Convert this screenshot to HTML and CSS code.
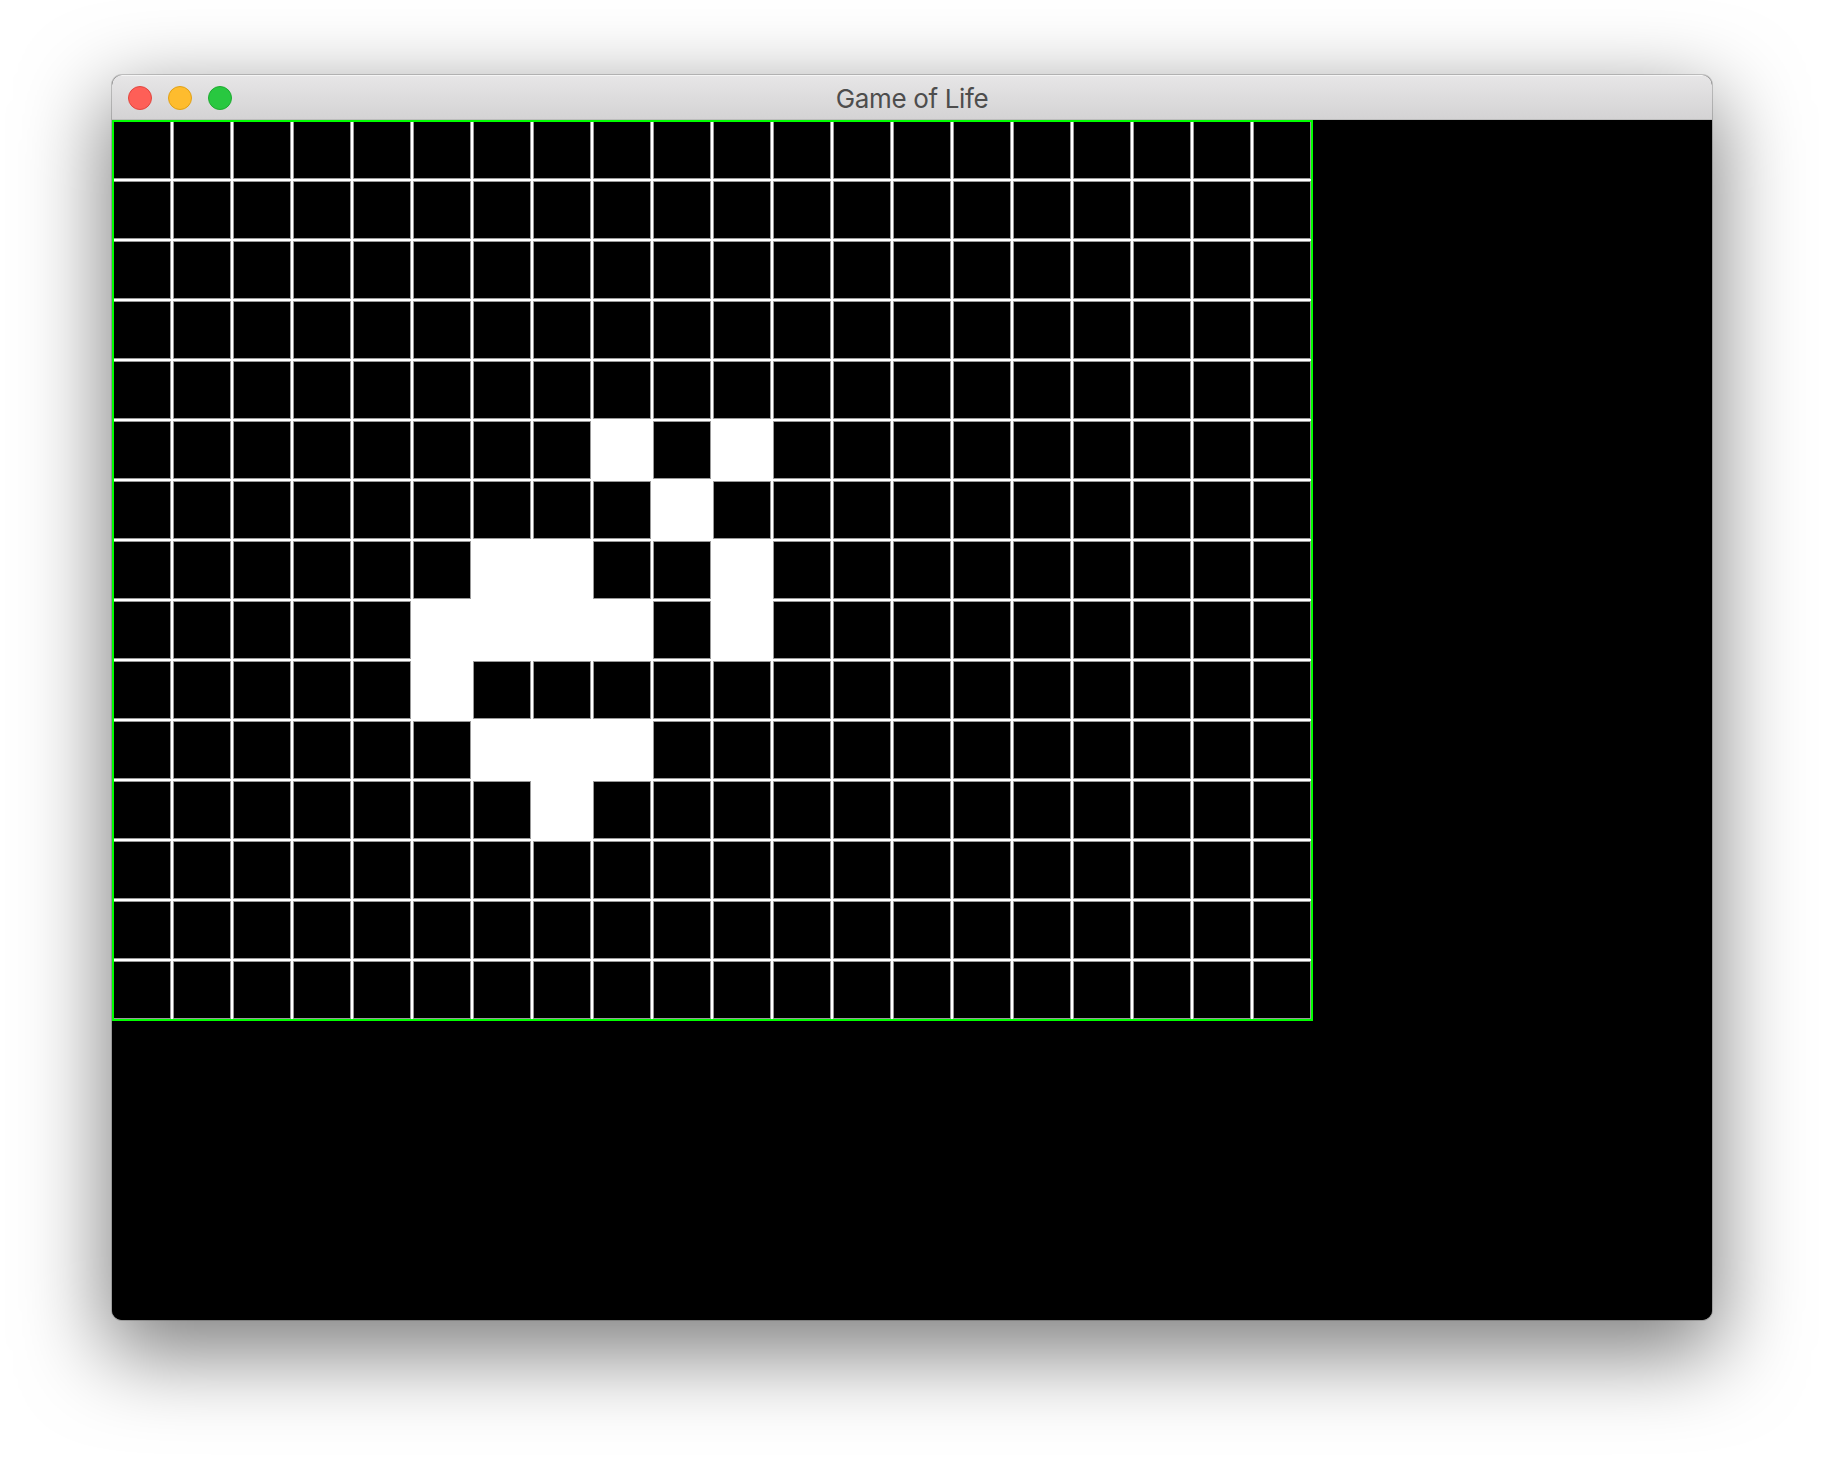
FILE: index.html
```html
<!DOCTYPE html>
<html lang="en">
<head>
<meta charset="utf-8">
<title>Game of Life</title>
<link rel="stylesheet" href="styles.css">
</head>
<body>
<div class="window">
  <div class="titlebar">
    <div class="lights">
      <span class="light close"></span>
      <span class="light min"></span>
      <span class="light max"></span>
    </div>
    <div class="title">Game of Life</div>
  </div>
  <div class="content">
    <div class="board">
      <div class="grid">
        <!-- row 0 -->
        <div class="cell"></div><div class="cell"></div><div class="cell"></div><div class="cell"></div><div class="cell"></div><div class="cell"></div><div class="cell"></div><div class="cell"></div><div class="cell"></div><div class="cell"></div><div class="cell"></div><div class="cell"></div><div class="cell"></div><div class="cell"></div><div class="cell"></div><div class="cell"></div><div class="cell"></div><div class="cell"></div><div class="cell"></div><div class="cell"></div>
        <!-- row 1 -->
        <div class="cell"></div><div class="cell"></div><div class="cell"></div><div class="cell"></div><div class="cell"></div><div class="cell"></div><div class="cell"></div><div class="cell"></div><div class="cell"></div><div class="cell"></div><div class="cell"></div><div class="cell"></div><div class="cell"></div><div class="cell"></div><div class="cell"></div><div class="cell"></div><div class="cell"></div><div class="cell"></div><div class="cell"></div><div class="cell"></div>
        <!-- row 2 -->
        <div class="cell"></div><div class="cell"></div><div class="cell"></div><div class="cell"></div><div class="cell"></div><div class="cell"></div><div class="cell"></div><div class="cell"></div><div class="cell"></div><div class="cell"></div><div class="cell"></div><div class="cell"></div><div class="cell"></div><div class="cell"></div><div class="cell"></div><div class="cell"></div><div class="cell"></div><div class="cell"></div><div class="cell"></div><div class="cell"></div>
        <!-- row 3 -->
        <div class="cell"></div><div class="cell"></div><div class="cell"></div><div class="cell"></div><div class="cell"></div><div class="cell"></div><div class="cell"></div><div class="cell"></div><div class="cell"></div><div class="cell"></div><div class="cell"></div><div class="cell"></div><div class="cell"></div><div class="cell"></div><div class="cell"></div><div class="cell"></div><div class="cell"></div><div class="cell"></div><div class="cell"></div><div class="cell"></div>
        <!-- row 4 -->
        <div class="cell"></div><div class="cell"></div><div class="cell"></div><div class="cell"></div><div class="cell"></div><div class="cell"></div><div class="cell"></div><div class="cell"></div><div class="cell"></div><div class="cell"></div><div class="cell"></div><div class="cell"></div><div class="cell"></div><div class="cell"></div><div class="cell"></div><div class="cell"></div><div class="cell"></div><div class="cell"></div><div class="cell"></div><div class="cell"></div>
        <!-- row 5 -->
        <div class="cell"></div><div class="cell"></div><div class="cell"></div><div class="cell"></div><div class="cell"></div><div class="cell"></div><div class="cell"></div><div class="cell"></div><div class="cell live"></div><div class="cell"></div><div class="cell live"></div><div class="cell"></div><div class="cell"></div><div class="cell"></div><div class="cell"></div><div class="cell"></div><div class="cell"></div><div class="cell"></div><div class="cell"></div><div class="cell"></div>
        <!-- row 6 -->
        <div class="cell"></div><div class="cell"></div><div class="cell"></div><div class="cell"></div><div class="cell"></div><div class="cell"></div><div class="cell"></div><div class="cell"></div><div class="cell"></div><div class="cell live"></div><div class="cell"></div><div class="cell"></div><div class="cell"></div><div class="cell"></div><div class="cell"></div><div class="cell"></div><div class="cell"></div><div class="cell"></div><div class="cell"></div><div class="cell"></div>
        <!-- row 7 -->
        <div class="cell"></div><div class="cell"></div><div class="cell"></div><div class="cell"></div><div class="cell"></div><div class="cell"></div><div class="cell live"></div><div class="cell live"></div><div class="cell"></div><div class="cell"></div><div class="cell live"></div><div class="cell"></div><div class="cell"></div><div class="cell"></div><div class="cell"></div><div class="cell"></div><div class="cell"></div><div class="cell"></div><div class="cell"></div><div class="cell"></div>
        <!-- row 8 -->
        <div class="cell"></div><div class="cell"></div><div class="cell"></div><div class="cell"></div><div class="cell"></div><div class="cell live"></div><div class="cell live"></div><div class="cell live"></div><div class="cell live"></div><div class="cell"></div><div class="cell live"></div><div class="cell"></div><div class="cell"></div><div class="cell"></div><div class="cell"></div><div class="cell"></div><div class="cell"></div><div class="cell"></div><div class="cell"></div><div class="cell"></div>
        <!-- row 9 -->
        <div class="cell"></div><div class="cell"></div><div class="cell"></div><div class="cell"></div><div class="cell"></div><div class="cell live"></div><div class="cell"></div><div class="cell"></div><div class="cell"></div><div class="cell"></div><div class="cell"></div><div class="cell"></div><div class="cell"></div><div class="cell"></div><div class="cell"></div><div class="cell"></div><div class="cell"></div><div class="cell"></div><div class="cell"></div><div class="cell"></div>
        <!-- row 10 -->
        <div class="cell"></div><div class="cell"></div><div class="cell"></div><div class="cell"></div><div class="cell"></div><div class="cell"></div><div class="cell live"></div><div class="cell live"></div><div class="cell live"></div><div class="cell"></div><div class="cell"></div><div class="cell"></div><div class="cell"></div><div class="cell"></div><div class="cell"></div><div class="cell"></div><div class="cell"></div><div class="cell"></div><div class="cell"></div><div class="cell"></div>
        <!-- row 11 -->
        <div class="cell"></div><div class="cell"></div><div class="cell"></div><div class="cell"></div><div class="cell"></div><div class="cell"></div><div class="cell"></div><div class="cell live"></div><div class="cell"></div><div class="cell"></div><div class="cell"></div><div class="cell"></div><div class="cell"></div><div class="cell"></div><div class="cell"></div><div class="cell"></div><div class="cell"></div><div class="cell"></div><div class="cell"></div><div class="cell"></div>
        <!-- row 12 -->
        <div class="cell"></div><div class="cell"></div><div class="cell"></div><div class="cell"></div><div class="cell"></div><div class="cell"></div><div class="cell"></div><div class="cell"></div><div class="cell"></div><div class="cell"></div><div class="cell"></div><div class="cell"></div><div class="cell"></div><div class="cell"></div><div class="cell"></div><div class="cell"></div><div class="cell"></div><div class="cell"></div><div class="cell"></div><div class="cell"></div>
        <!-- row 13 -->
        <div class="cell"></div><div class="cell"></div><div class="cell"></div><div class="cell"></div><div class="cell"></div><div class="cell"></div><div class="cell"></div><div class="cell"></div><div class="cell"></div><div class="cell"></div><div class="cell"></div><div class="cell"></div><div class="cell"></div><div class="cell"></div><div class="cell"></div><div class="cell"></div><div class="cell"></div><div class="cell"></div><div class="cell"></div><div class="cell"></div>
        <!-- row 14 -->
        <div class="cell"></div><div class="cell"></div><div class="cell"></div><div class="cell"></div><div class="cell"></div><div class="cell"></div><div class="cell"></div><div class="cell"></div><div class="cell"></div><div class="cell"></div><div class="cell"></div><div class="cell"></div><div class="cell"></div><div class="cell"></div><div class="cell"></div><div class="cell"></div><div class="cell"></div><div class="cell"></div><div class="cell"></div><div class="cell"></div>
      </div>
    </div>
  </div>
</div>
</body>
</html>
```

FILE: styles.css
```css
html, body {
  margin: 0;
  padding: 0;
  background: #ffffff;
}

body {
  padding: 75px 112px 148px;
  font-family: "Inter", "Noto Sans", "Liberation Sans", sans-serif;
}

.window {
  width: 1600px;
  height: 1245px;
  border-radius: 10px;
  overflow: hidden;
  background: #000;
  box-shadow: 0 28px 84px 6px rgba(0, 0, 0, 0.5), 0 0 0 1px rgba(0, 0, 0, 0.18);
  display: flex;
  flex-direction: column;
}

.titlebar {
  height: 44px;
  flex: none;
  border-bottom: 1px solid #bdbdbd;
  background: linear-gradient(#e7e6e7, #d4d3d4);
  box-shadow: inset 0 1px 0 rgba(255, 255, 255, 0.6);
  display: flex;
  align-items: center;
  position: relative;
}

.lights {
  display: flex;
  gap: 16px;
  padding-left: 16px;
  padding-top: 2px;
}

.light {
  width: 24px;
  height: 24px;
  border-radius: 50%;
  box-sizing: border-box;
}

.close { background: #fe5f57; border: 1px solid #e2463f; }
.min   { background: #febc2e; border: 1px solid #e1a116; }
.max   { background: #28c840; border: 1px solid #1fab31; }

.title {
  position: absolute;
  left: 0;
  right: 0;
  top: 2px;
  text-align: center;
  font-size: 26px;
  letter-spacing: -0.35px;
  color: #4d4d4d;
  line-height: 44px;
}

.content {
  flex: 1;
  background: #000;
}

.board {
  width: 1201px;
  height: 901px;
  position: relative;
}

.board::after {
  content: "";
  position: absolute;
  inset: 0;
  border: 2px solid #00ff00;
}

.grid {
  width: 1200px;
  height: 900px;
  background: #ffffff;
  display: grid;
  grid-template-columns: repeat(20, 60px);
  grid-template-rows: repeat(15, 60px);
}

.cell {
  margin: 2px;
  background: #000;
  box-shadow: 0 0 0 1px rgba(0, 0, 0, 0.4);
}

.cell.live {
  background: transparent;
  box-shadow: none;
}
```
